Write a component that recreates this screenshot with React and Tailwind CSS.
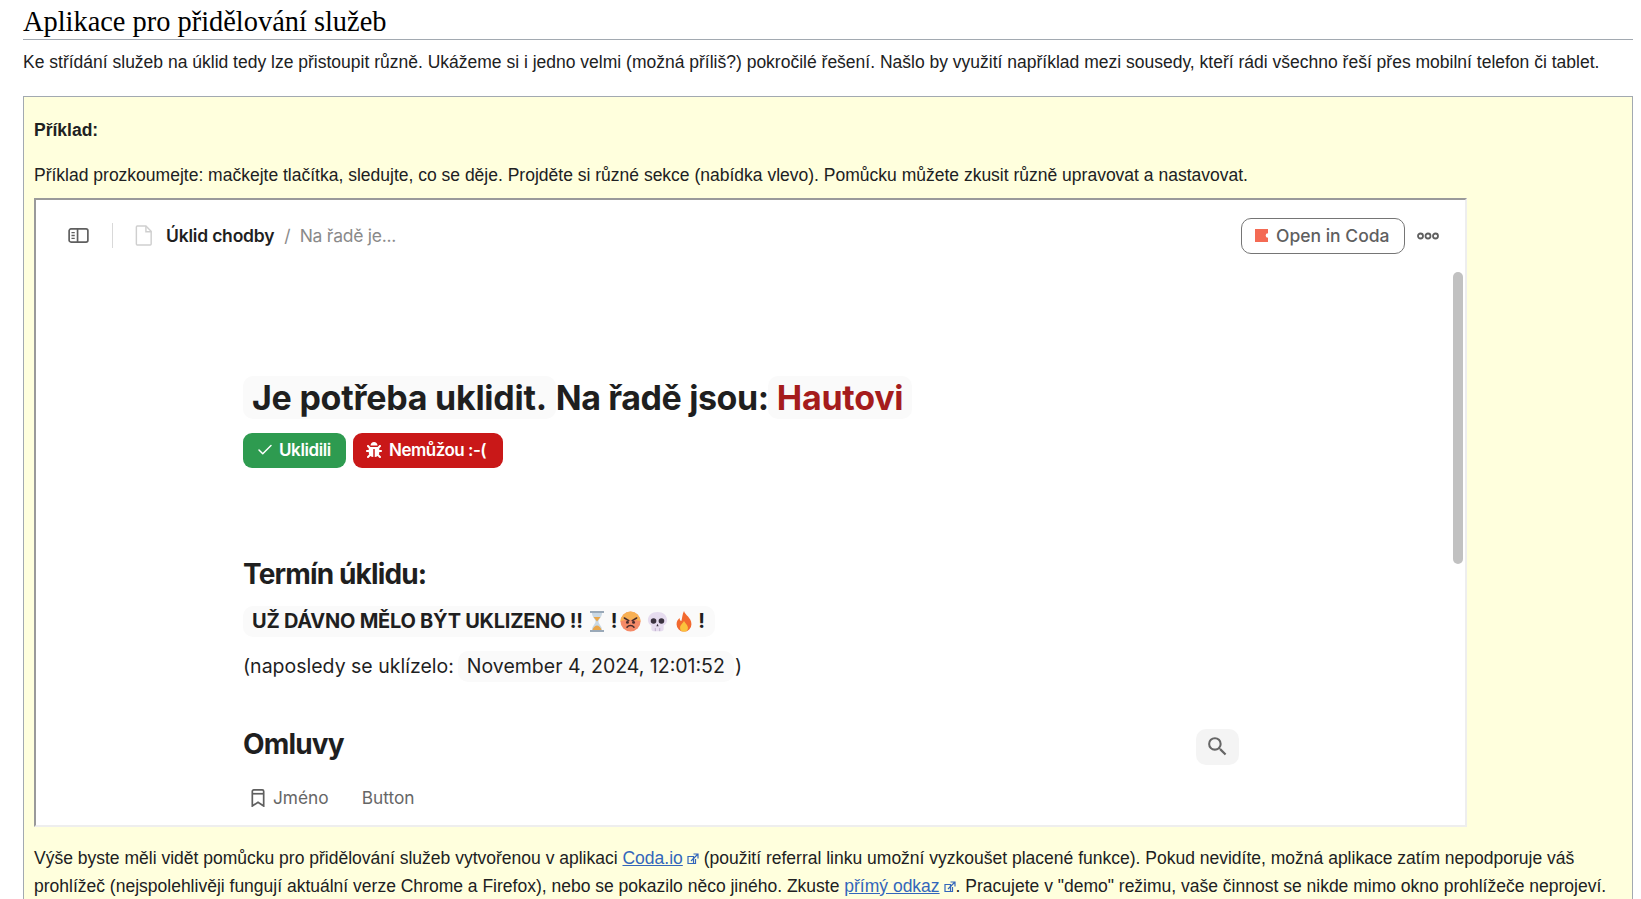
import React from "react";
import { Check } from "lucide-react";
import { MdSearch } from "react-icons/md";
import { FaBug } from "react-icons/fa";

const ExtLink = () => (
  <svg viewBox="0 0 12 12" className="inline-block w-[12px] h-[12px] ml-[4px] align-[-1px]" fill="none" stroke="#3366bb" strokeWidth="1.2">
    <path d="M1 3.500h5.500v7H1z M1 3.500v7h7.500V6" />
    <path d="M4 8l6.500-6.500M6.500 1h4.500v4.500" />
  </svg>
);

const Hourglass = () => (
  <svg viewBox="0 0 16 21" className="w-[16px] h-[21px]">
    <path d="M1 0h14v2H1zM1 19h14v2H1z" fill="#9aa9b8" />
    <path d="M3 2h10c0 4-3.500 6-3.500 8.500S13 15 13 19H3c0-4 3.500-6 3.500-8.500S3 6 3 2z" fill="#c9d8e4" />
    <path d="M4.500 6h7L8 10.500zM3.500 19c.7-3 3-4.500 4.500-4.500s3.800 1.500 4.500 4.500z" fill="#e9a64a" />
  </svg>
);

const Angry = () => (
  <svg viewBox="0 0 24 24" className="w-[21px] h-[21px]">
    <circle cx="12" cy="12" r="11.500" fill="#f58a68" />
    <path d="M.5 12a11.500 11.500 0 0 1 23 0c-4-2.500-19-2.500-23 0z" fill="#f9b94e" opacity=".8" />
    <path d="M5 8l5 3M19 8l-5 3" stroke="#4a2d2d" strokeWidth="1.800" strokeLinecap="round" />
    <circle cx="8.500" cy="13" r="1.700" fill="#4a2d2d" />
    <circle cx="15.500" cy="13" r="1.700" fill="#4a2d2d" />
    <path d="M8 18.500c2-2.500 6-2.500 8 0" stroke="#4a2d2d" strokeWidth="1.800" fill="none" strokeLinecap="round" />
  </svg>
);

const Skull = () => (
  <svg viewBox="0 0 24 24" className="w-[21px] h-[21px]">
    <path d="M12 1c6.500 0 11 4 11 9.500 0 3-2 5-4 6v4c0 1.500-1 2.500-2.500 2.500h-9C6 23 5 22 5 20.500v-4c-2-1-4-3-4-6C1 5 5.500 1 12 1z" fill="#e6dcef" />
    <circle cx="7.500" cy="11.500" r="3.200" fill="#3b3340" />
    <circle cx="16.500" cy="11.500" r="3.200" fill="#3b3340" />
    <path d="M12 14.500l-1.300 2.800h2.600z" fill="#3b3340" />
    <path d="M9.500 19.500V23M14.500 19.500V23" stroke="#b9abc6" strokeWidth="1" />
  </svg>
);

const Fire = () => (
  <svg viewBox="0 0 20 24" className="w-[18px] h-[21px]">
    <path d="M10 0c1 4.500 8.500 7.500 8.500 15a8.500 8.500 0 0 1-17 0c0-3 1.500-5.500 3.500-7 0 2 .8 3.500 2 3.500C8 8 8 4 10 0z" fill="#f2692f" />
    <path d="M10 11c.5 2.500 4.500 4.500 4.500 8a4.500 4.500 0 0 1-9 0c0-3.500 3.500-5 4.500-8z" fill="#fbc23c" />
  </svg>
);

const App = () => {
  return (
    <div className="w-[1641px] h-[899px] overflow-hidden bg-white pl-[23px] pr-[8px] font-['Liberation_Sans',sans-serif] text-[17.5px] text-[#202122]">
      <h2 className="h-[40px] pt-[6px] border-b border-[#a2a9b1] font-['Liberation_Serif',serif] text-[28.4px] leading-[32px] text-black">
        Aplikace pro přidělování služeb
      </h2>
      <p className="mt-[10px] leading-[25.6px] whitespace-nowrap">
        Ke střídání služeb na úklid tedy lze přistoupit různě. Ukážeme si i jedno velmi (možná příliš?) pokročilé řešení. Našlo by využití například mezi sousedy, kteří rádi všechno řeší přes mobilní telefon či tablet.
      </p>
      <div className="mt-[20px] h-[900px] border border-[#a2a9b1] bg-[#ffffdd] px-[10px]">
        <p className="mt-[21px] leading-[25.6px] font-bold">Příklad:</p>
        <p className="mt-[20px] leading-[25.6px]">
          Příklad prozkoumejte: mačkejte tlačítka, sledujte, co se děje. Projděte si různé sekce (nabídka vlevo). Pomůcku můžete zkusit různě upravovat a nastavovat.
        </p>
        <div className="relative mt-[9px] w-[1433px] h-[629px] overflow-hidden bg-white border-2 border-t-[#9a9a9a] border-l-[#9a9a9a] border-r-[#eeeeee] border-b-[#eeeeee] font-['Inter',sans-serif]">
          <div className="flex items-center h-[72px] pl-[32px] pr-[26px]">
            <svg viewBox="0 0 22 16" className="w-[21px] h-[15px]" fill="none" stroke="#5f5f5f" strokeWidth="1.800">
              <rect x="1" y="1" width="20" height="14" rx="2" />
              <path d="M10 1v14" />
              <path d="M3.500 5h3.500M3.500 8h3.500M3.500 11h3.500" strokeWidth="1.400" />
            </svg>
            <div className="ml-[23px] w-px h-[25px] bg-[#d9d9d9]" />
            <svg viewBox="0 0 18 22" className="ml-[22px] w-[18px] h-[21px]" fill="none" stroke="#cfcfcf" strokeWidth="1.500">
              <path d="M2 1h9l5.500 5.500V20a1 1 0 0 1-1 1H2a1 1 0 0 1-1-1V2a1 1 0 0 1 1-1z" />
              <path d="M11 1v6h5.500" />
            </svg>
            <span className="ml-[13px] text-[17.500px] font-semibold text-[#1f1f1f] tracking-[-0.2px]">Úklid chodby</span>
            <span className="ml-[10px] text-[17.500px] text-[#8a8a8a]">/</span>
            <span className="ml-[9px] text-[17.500px] text-[#8a8a8a] tracking-[-0.25px]">Na řadě je...</span>
            <div className="ml-auto flex items-center gap-[8px] w-[164px] h-[36px] pl-[13px] border border-[#757575] rounded-[10px] text-[17.500px] font-medium text-[#5f5f5f]">
              <svg viewBox="0 0 14 14" className="w-[13px] h-[13px]">
                <path d="M0 0h14v4.500a2.500 2.500 0 0 0 0 5V14H0z" fill="#f46a54" />
              </svg>
              Open in Coda
            </div>
            <svg viewBox="0 0 22 8" className="ml-[12px] w-[22px] h-[8px]" fill="none" stroke="#5f5f5f" strokeWidth="1.800">
              <circle cx="3.500" cy="4" r="2.500" />
              <circle cx="11" cy="4" r="2.500" />
              <circle cx="18.500" cy="4" r="2.500" />
            </svg>
          </div>
          <div className="absolute left-[1417px] top-[72px] w-[10px] h-[292px] rounded-[5px] bg-[#c1c1c1]" />
          <div className="pl-[207px] w-[1212px]">
            <div className="mt-[104px] flex">
              <h1 className="h-[43px] flex items-center text-[34px] font-bold text-[#1f1f1f] tracking-[-0.25px] whitespace-nowrap">
                <span className="h-[43px] leading-[43px] px-[9px] bg-[#fafafa] rounded-[10px]">Je potřeba uklidit.</span>
                <span className="tracking-[-0.4px]">Na řadě jsou:</span>
                <span className="-ml-[1px] h-[43px] leading-[43px] px-[9px] bg-[#fafafa] rounded-[10px] text-[#a51c1c]">Hautovi</span>
              </h1>
            </div>
            <div className="mt-[14px] flex gap-[7px]">
              <div className="flex items-center gap-[5px] w-[103px] h-[35px] pl-[13px] bg-[#2e9b50] rounded-[9px] text-white text-[17px] font-semibold tracking-[-0.4px]">
                <Check size={18} strokeWidth={2} />
                Uklidili
              </div>
              <div className="flex items-center gap-[7px] w-[150px] h-[35px] pl-[13px] bg-[#c91818] rounded-[9px] text-white text-[17px] font-semibold tracking-[-0.5px]">
                <FaBug size={16} />
                Nemůžou :-(
              </div>
            </div>
            <h2 className="mt-[86px] text-[28px] leading-[40px] font-bold text-[#1f1f1f] tracking-[-0.85px]">Termín úklidu:</h2>
            <div className="mt-[12px] inline-flex items-center h-[31px] pl-[9px] pr-[10px] bg-[#fafafa] rounded-[10px] text-[20px] font-bold text-[#1f1f1f] tracking-[-0.25px] whitespace-nowrap">
              UŽ DÁVNO MĚLO BÝT UKLIZENO !!
              <span className="ml-[6px]"><Hourglass /></span>
              <span className="ml-[6px]">!</span>
              <span className="ml-[3px]"><Angry /></span>
              <span className="ml-[6px]"><Skull /></span>
              <span className="ml-[7px]"><Fire /></span>
              <span className="ml-[5px]">!</span>
            </div>
            <div className="mt-[14px] flex items-center h-[31px] text-[19.500px] text-[#1f1f1f]">
              (naposledy se uklízelo:
              <span className="ml-[4px] h-[31px] leading-[31px] px-[9px] bg-[#fafafa] rounded-[10px]">November 4, 2024, 12:01:52</span>
              <span className="ml-[1px]">)</span>
            </div>
            <div className="mt-[44px] flex items-start justify-between h-[37px]">
              <h2 className="text-[28px] leading-[37px] font-bold text-[#1f1f1f] tracking-[-0.85px]">Omluvy</h2>
              <div className="mt-[3px] mr-[9px] flex items-center justify-center w-[43px] h-[36px] bg-[#f4f4f4] rounded-[10px]">
                <MdSearch size={25} className="text-[#666666]" />
              </div>
            </div>
            <div className="mt-[22px] flex items-center text-[17.300px] text-[#666666]">
              <svg viewBox="0 0 14 19" className="ml-[8px] w-[14px] h-[18px]" fill="none" stroke="#5f5f5f" strokeWidth="1.800">
                <path d="M2.500 1h9a1.500 1.500 0 0 1 1.500 1.500V18l-6-4-6 4V2.500A1.500 1.500 0 0 1 2.500 1z" />
                <path d="M1 5h12" />
              </svg>
              <span className="ml-[8px]">Jméno</span>
              <span className="ml-[33px]">Button</span>
            </div>
          </div>
        </div>
        <p className="mt-[17px] leading-[28px]">
          Výše byste měli vidět pomůcku pro přidělování služeb vytvořenou v aplikaci <a className="text-[#3366bb] underline">Coda.io</a><ExtLink /> (použití referral linku umožní vyzkoušet placené funkce). Pokud nevidíte, možná aplikace zatím nepodporuje váš prohlížeč (nejspolehlivěji fungují aktuální verze Chrome a Firefox), nebo se pokazilo něco jiného. Zkuste <a className="text-[#3366bb] underline">přímý odkaz</a><ExtLink />. Pracujete v "demo" režimu, vaše činnost se nikde mimo okno prohlížeče neprojeví.
        </p>
      </div>
    </div>
  );
};

export default App;
